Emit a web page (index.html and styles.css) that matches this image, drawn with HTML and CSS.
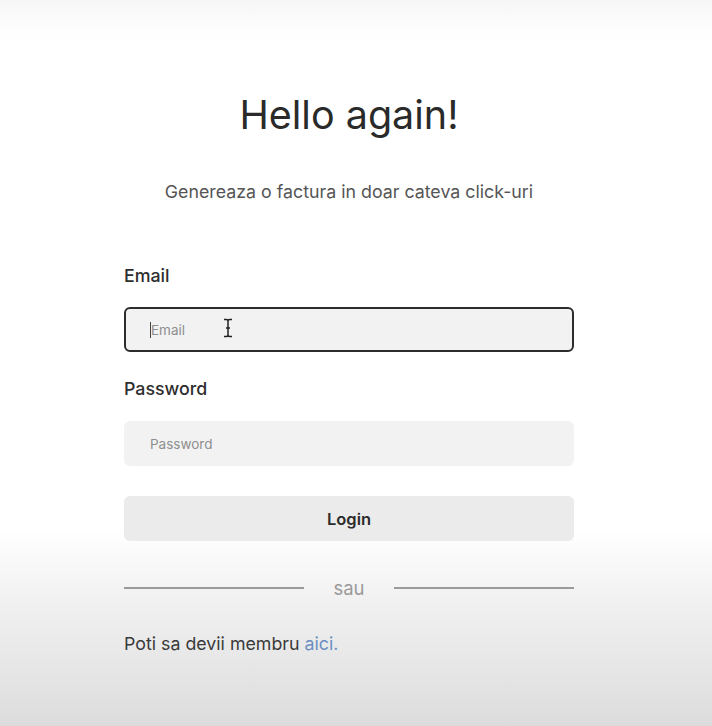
FILE: index.html
```html
<!DOCTYPE html>
<html>
<head>
<meta charset="utf-8">
<link rel="stylesheet" href="styles.css">
</head>
<body>
<main class="page">
  <section class="card">
    <h1 class="title">Hello again!</h1>
    <p class="subtitle">Genereaza o factura in doar cateva click-uri</p>
    <form class="form">
      <label class="label">Email</label>
      <div class="field field-focus">
        <span class="caret"></span><span class="placeholder">Email</span>
        <svg class="ibeam" width="10" height="20" viewBox="0 0 10 20"><path d="M1 1.5h2.5c1 0 1.5.5 1.5 1.5M9 1.5H6.5c-1 0-1.5.5-1.5 1.5v14c0 1-.5 1.5-1.5 1.5H1M5 17c0 1 .5 1.5 1.5 1.5H9M3 10h4" fill="none" stroke="#222" stroke-width="1.5"/></svg>
      </div>
      <label class="label label-pw">Password</label>
      <div class="field"><span class="placeholder">Password</span></div>
      <button type="button" class="btn">Login</button>
    </form>
    <div class="divider"><span class="line"></span><span class="or">sau</span><span class="line"></span></div>
    <p class="signup">Poti sa devii membru <a class="link">aici.</a></p>
  </section>
</main>
</body>
</html>
```
FILE: styles.css
```css
html, body {
  margin: 0;
  padding: 0;
  height: 100%;
}
body {
  font-family: Inter, "Noto Sans", sans-serif;
  background: linear-gradient(to bottom, #f6f6f6 0px, #fefefe 30px, #ffffff 60px, #ffffff 530px, #f1f1f1 600px, #e4e4e4 680px, #dcdcdc 726px);
  color: #2b2b2b;
}
.page {
  height: 726px;
  overflow: hidden;
}
.card {
  width: 450px;
  margin-left: 124px;
  padding-top: 90px;
  display: flex;
  flex-direction: column;
}
.title {
  margin: 0;
  text-align: center;
  font-size: 39.5px;
  font-weight: 400;
  line-height: 50px;
  color: #2a2a2a;
}
.subtitle {
  margin: 40px 0 0;
  text-align: center;
  font-size: 17.8px;
  line-height: 24px;
  color: #555;
}
.form {
  display: flex;
  flex-direction: column;
  margin-top: 61px;
}
.label {
  font-size: 17.8px;
  font-weight: 500;
  line-height: 22px;
  color: #2e2e2e;
}
.label-pw {
  margin-top: 26px;
}
.field {
  position: relative;
  margin-top: 21px;
  height: 45px;
  box-sizing: border-box;
  background: #f2f2f2;
  border-radius: 6px;
  display: flex;
  align-items: center;
  padding-left: 26px;
}
.field-focus {
  margin-top: 20px;
  border: 2px solid #2c2c2c;
  padding-left: 24px;
}
.placeholder {
  font-size: 13.5px;
  color: #8e8e8e;
}
.caret {
  width: 1px;
  height: 16px;
  background: #444;
}
.ibeam {
  position: absolute;
  left: 97px;
  top: 9px;
}
.btn {
  margin-top: 30px;
  height: 45px;
  border: none;
  border-radius: 6px;
  background: #ebebeb;
  font-family: Inter, "Noto Sans", sans-serif;
  font-size: 16.5px;
  font-weight: 600;
  color: #2b2b2b;
}
.divider {
  margin-top: 35px;
  display: flex;
  align-items: center;
}
.line {
  flex: 1;
  height: 2px;
  background: #9a9a9a;
}
.or {
  width: 90px;
  text-align: center;
  font-size: 18.5px;
  color: #9a9a9a;
  line-height: 24px;
}
.signup {
  margin: 32px 0 0;
  font-size: 17.8px;
  line-height: 24px;
  color: #3a3a3a;
}
.link {
  color: #6b8fc2;
}
```
